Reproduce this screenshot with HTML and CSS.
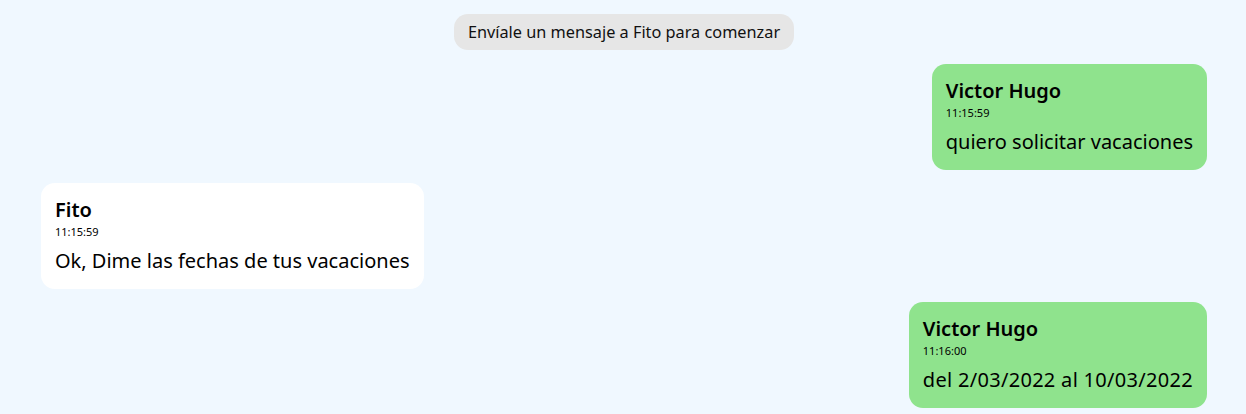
FILE: index.html
```html
<!DOCTYPE html>
<html lang="es">
<head>
<meta charset="utf-8">
<title>Chat</title>
<link rel="stylesheet" href="styles.css">
</head>
<body>
<main class="chat">
  <div class="notice">Envíale un mensaje a Fito para comenzar</div>
  <div class="row row-out">
    <div class="bubble bubble-out">
      <div class="name">Victor Hugo</div>
      <div class="time">11:15:59</div>
      <div class="text">quiero solicitar vacaciones</div>
    </div>
  </div>
  <div class="row row-in">
    <div class="bubble bubble-in">
      <div class="name">Fito</div>
      <div class="time">11:15:59</div>
      <div class="text">Ok, Dime las fechas de tus vacaciones</div>
    </div>
  </div>
  <div class="row row-out">
    <div class="bubble bubble-out">
      <div class="name">Victor Hugo</div>
      <div class="time">11:16:00</div>
      <div class="text text-date">del 2/03/2022 al 10/03/2022</div>
    </div>
  </div>
</main>
</body>
</html>
```
FILE: styles.css
```css
html, body {
  margin: 0;
  background: #f0f8ff;
  font-family: "Noto Sans", "Open Sans", sans-serif;
  color: #000;
}
.chat {
  display: flex;
  flex-direction: column;
  gap: 13px;
  padding: 14px 39px 0 41px;
}
.notice {
  align-self: center;
  background: #e6e6e6;
  border-radius: 14px;
  height: 36px;
  line-height: 36px;
  padding: 0 14px;
  font-size: 16.3px;
  color: #111;
  margin-bottom: 1px;
}
.row {
  display: flex;
}
.row-out { justify-content: flex-end; }
.row-in { justify-content: flex-start; }
.bubble {
  border-radius: 14px;
  padding: 14px 14px 14px 14px;
}
.bubble-out { background: #8fe38d; }
.bubble-in { background: #ffffff; }
.name {
  font-size: 20px;
  font-weight: 600;
  line-height: 26px;
}
.time {
  font-size: 11px;
  line-height: 17px;
}
.text {
  margin-top: 7px;
  font-size: 20px;
  line-height: 28px;
}
.text-date {
  letter-spacing: 0.3px;
}
```
